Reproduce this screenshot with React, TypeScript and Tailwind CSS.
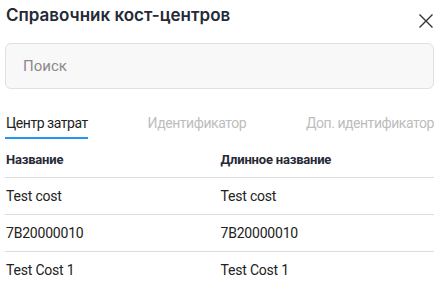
import { useState } from 'react';

const rows = [
  { name: 'Test cost', longName: 'Test cost' },
  { name: '7B20000010', longName: '7B20000010' },
  { name: 'Test Cost 1', longName: 'Test Cost 1' },
];

const tabs = ['Центр затрат', 'Идентификатор', 'Доп. идентификатор'];

const App = () => {
  const [activeTab, setActiveTab] = useState(0);
  const [query, setQuery] = useState('');

  return (
    <div className="w-[440px] h-[288px] overflow-hidden bg-white pl-[5px] pr-[6px] font-['Roboto',sans-serif]">
      <div className="flex items-start justify-between pt-[3px]">
        <h2 className="text-[17px] leading-6 font-semibold text-[#262a36] font-['Inter',sans-serif] pl-px">
          Справочник кост-центров
        </h2>
        <button className="mt-[11px] mr-px text-[#333]">
          <svg width="14" height="14" viewBox="0 0 14 14" fill="none" stroke="currentColor" strokeWidth="1.4">
            <path d="M0.5 0.5L13.5 13.5M13.5 0.5L0.5 13.5" />
          </svg>
        </button>
      </div>

      <input
        value={query}
        onChange={e => setQuery(e.target.value)}
        placeholder="Поиск"
        className="mt-[15px] w-full h-[46px] rounded-md border border-[#e0e0e0] bg-[#f8f8f8] px-[17px] text-[15px] text-[#333] placeholder:text-[#8a8a8a] outline-none"
      />

      <div className="mt-[21px] flex justify-between text-[14px] leading-[26px] tracking-[-0.45px]">
        {tabs.map((tab, i) => (
          <button
            key={tab}
            onClick={() => setActiveTab(i)}
            className={`pl-px pb-[1px] border-b-2 ${activeTab === i ? 'text-[#222] border-[#2196f3]' : 'text-[#bdbdbd] border-transparent'}`}
          >
            {tab}
          </button>
        ))}
      </div>

      <div className="grid grid-cols-2 border-b border-[#dcdcdc] h-[39px] items-center pt-[4px] text-[13px] tracking-[-0.2px] font-bold text-[#262a36]">
        <div className="pl-px">Название</div>
        <div className="pl-px">Длинное название</div>
      </div>

      {rows.map(row => (
        <div key={row.name} className="grid grid-cols-2 border-b border-[#dcdcdc] h-[37px] items-center text-[14px] tracking-[-0.2px] text-[#222]">
          <div className="pl-px">{row.name}</div>
          <div className="pl-px">{row.longName}</div>
        </div>
      ))}
    </div>
  );
};

export default App;
